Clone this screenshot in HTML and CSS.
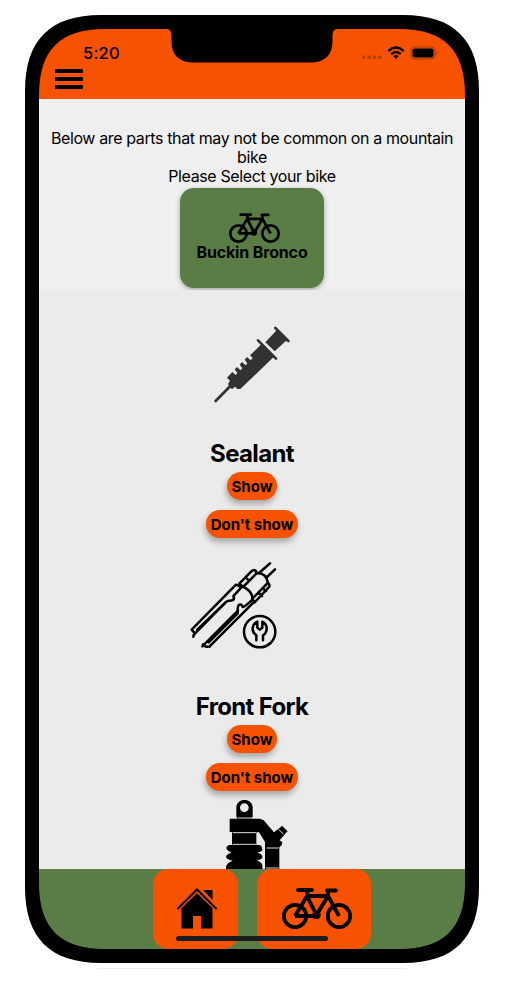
FILE: index.html
```html
<!DOCTYPE html>
<html lang="en">
<head>
<meta charset="utf-8">
<title>Bike parts</title>
<link rel="stylesheet" href="styles.css">
</head>
<body>
<svg class="defs" width="0" height="0" aria-hidden="true">
  <symbol id="bike" viewBox="0 0 70 41">
    <g fill="none" stroke="currentColor" stroke-width="3.800" stroke-linejoin="round">
      <circle cx="13" cy="28" r="11.2"/><circle cx="57" cy="28" r="11.2"/>
      <path d="M13 28 25 8H46L34.500 27M13 28H34.500M25 8 34.500 27M46 8 57 28M24 2 27 9M46 9V2"/>
      <path d="M16 2H30M45 2.500H54" stroke-linecap="round"/>
    </g>
    <circle cx="34.500" cy="27" r="4.200" fill="currentColor"/>
  </symbol>
</svg>
<div class="phone">
  <div class="screen">
    <header class="top">
      <div class="status">
        <span class="time">5:20</span>
        <svg class="indicators" width="78" height="16" viewBox="0 0 78 16">
          <g fill="#b94000"><rect x="1" y="10.500" width="3.500" height="3.500" rx="1"/><rect x="6.300" y="10.500" width="3.500" height="3.500" rx="1"/><rect x="11.600" y="10.500" width="3.500" height="3.500" rx="1"/><rect x="16.900" y="10.500" width="3.500" height="3.500" rx="1"/></g>
          <g fill="none" stroke="#000" stroke-width="2.300"><path d="M27.300 6.200Q35 -1.300 42.700 6.200"/><path d="M30.300 9.200Q35 4.800 39.700 9.200"/></g>
          <path d="M32.400 11.200Q35 9 37.600 11.200L35 14Z"/>
          <rect x="50" y="2" width="24" height="12" rx="3.500" fill="none" stroke="#a83800"/>
          <rect x="51.500" y="3.500" width="21" height="9" rx="2"/>
          <path d="M75.500 6Q77.500 8 75.500 10Z" fill="#a83800"/>
        </svg>
      </div>
      <div class="menu"><i></i><i></i><i></i></div>
      <div class="notch"></div>
    </header>
    <section class="intro">
      <p class="hint">Below are parts that may not be common on a mountain bike</p>
      <p class="select">Please Select your bike</p>
      <div class="bike-card">
        <svg class="card-icon"><use href="#bike"/></svg>
        <span>Buckin Bronco</span>
      </div>
    </section>
    <main class="parts">
      <article class="part sealant">
        <svg class="art" width="105" height="100" viewBox="0 0 315 300">
          <g fill="#323233">
            <path d="M196 82 230 46 260 76 224 109Z"/>
            <path d="M178 83 221 126 121 222H112L105 215 97 222 90 219 84 207 90 197 81 188 97 171 107 180 112 174 104 163 111 156 122 166 127 160 119 149 126 141 137 151 142 145 134 134 141 126 152 136 158 129 150 121 184 88Z"/>
          </g>
          <g stroke="#323233" stroke-width="8" stroke-linecap="round"><path d="M226 39 265 78M174 76 228 131M94 210 47 258"/></g>
        </svg>
        <h2>Sealant</h2>
        <button>Show</button>
        <button>Don't show</button>
      </article>
      <article class="part fork">
        <svg class="art" width="110" height="110" viewBox="0 0 330 330">
          <g fill="none" stroke="#000" stroke-width="7.500" stroke-linecap="round" stroke-linejoin="round">
            <path d="M35 239 168 104 185 111M41 255 133 161M35 239 42 247M41 255 40 260"/>
            <path d="M51 240 133 161Q140 151 150 152Q162 152 162 145Q158 137 165 133L183 113"/>
            <path d="M67 289 174 182M220 158 88 290M69 283 78 290 89 290"/>
            <path d="M86 277 173 190Q172 172 176 165Q184 160 188 171Q195 171 217 149"/>
            <path d="M178 101 214 64Q222 57 229 64V71L189 111M178 101 189 111M197 82 207 92"/>
            <path d="M180 107Q218 119 218 151M229 70Q259 67 264 99M237 69 270 40M258 84 285 58"/>
            <path d="M217 146 262 100Q270 101 268 110L223 158ZM236 128 246 138M248 115 258 123"/>
            <circle cx="239" cy="245" r="47"/>
            <path d="M229 271V256Q217 248 218 234Q220 221 232 215V233L239 239 247 233V215Q260 222 260 235Q260 250 249 256V271"/>
          </g>
        </svg>
        <h2>Front Fork</h2>
        <button>Show</button>
        <button>Don't show</button>
      </article>
      <article class="part shock">
        <svg class="art" width="90" height="85" viewBox="0 0 270 255">
          <path fill-rule="evenodd" d="M79 82V53C79 22 128 22 128 53V82H124V86H150L161 91 192 127 208 114 226 131 209 151 217 157 215 166 208 172V237H165V156L147 127H139V165H150Q158 170 157 179Q156 186 140 187Q156 192 158 201Q157 209 140 210Q158 218 158 230V255H48V230Q51 218 68 212Q49 207 48 200Q51 192 65 187Q49 181 49 173Q50 167 58 165H66V126H59V86H81V82ZM103 40A13 13 0 1 0 103 66A13 13 0 1 0 103 40Z"/>
          <path d="M207 116 216 107 233 124 223 133Z"/>
          <g stroke="#ddd" stroke-width="3"><path d="M83 84H123M68 128H138M68 163H138M169 174H206M168 234H206"/></g>
          <path d="M206 118 221 133" stroke="#ebebeb" stroke-width="3"/>
          <path d="M158 173H165V237H158Z" fill="#ebebeb"/>
        </svg>
      </article>
    </main>
    <nav class="tabs">
      <div class="tab home">
        <svg width="42" height="42" viewBox="0 0 42 42">
          <path d="M21 5 36.500 20V40.500H25V28H17V40.500H5.500V20ZM27 2H36.500V12Z"/>
          <path d="M1.500 21 21 2 40.500 21" fill="none" stroke="#f65200" stroke-width="4"/>
          <path d="M1.500 21 21 1.500 40.500 21" fill="none" stroke="#000" stroke-width="2"/>
        </svg>
      </div>
      <div class="tab bikes"><svg class="tab-icon"><use href="#bike"/></svg></div>
      <div class="indicator"></div>
    </nav>
  </div>
</div>
<div class="edge"></div>
</body>
</html>
```

FILE: styles.css
```css
* { box-sizing: border-box; }
body { margin: 0; background: #fff; color: #000; font-family: Inter, sans-serif; }
.defs { position: absolute; }
.phone {
  width: 454px; height: 948px; margin: 15px 0 0 25px; padding: 14px; background: #000;
  clip-path: path("M76 0H378C429 0 454 25 454 76V872C454 923 429 948 378 948H76C25 948 0 923 0 872V76C0 25 25 0 76 0Z");
}
.edge { width: 310px; height: 1px; margin: 5px 0 0 97px; background: #ededed; }
.screen {
  width: 426px; height: 920px; display: flex; flex-direction: column; overflow: hidden;
  clip-path: path("M66 0H360C405 0 426 21 426 66V854C426 899 405 920 360 920H66C21 920 0 899 0 854V66C0 21 21 0 66 0Z");
}
.top { position: relative; flex: 0 0 69.5px; background: #f65200; }
.status { display: flex; justify-content: space-between; align-items: center; height: 40px; padding: 8px 26px 0 44px; }
.time { font-size: 16.5px; font-weight: 500; line-height: 20px; letter-spacing: .2px; }
.menu { display: grid; gap: 4px; width: 28px; margin-left: 16px; }
.menu i { height: 4px; border-radius: 1px; background: #000; }
.notch { position: absolute; top: 0; left: 128px; width: 170px; height: 34px; background: #000;
  clip-path: path("M0 0H170Q165.500 0 165.500 7V12Q165.500 33.500 143 33.500H27Q4.500 33.500 4.500 12V7Q4.500 0 0 0Z"); }
.intro { flex: 0 0 191.5px; padding-top: 30px; background: #efefef; text-align: center; display: flex; flex-direction: column; align-items: center; overflow: hidden; }
.intro p { margin: 0; font-size: 16px; line-height: 19px; letter-spacing: -.38px; }
.hint { width: 414px; }
.bike-card { width: 144px; height: 99.5px; margin-top: 2.5px; padding-top: 24.5px; border-radius: 14px; background: #5a7d45; box-shadow: 0 2px 5px rgba(0,0,0,.3); display: flex; flex-direction: column; align-items: center; font-size: 16px; font-weight: 700; line-height: 19px; letter-spacing: -.15px; }
.bike-card svg { display: block; width: 51px; height: 30px; margin-left: 5px; }
.parts { flex: 1; min-height: 0; overflow: hidden; background: #ebebeb; }
.part { display: flex; flex-direction: column; align-items: center; }
.part h2 { margin: 0; font-size: 24px; font-weight: 700; line-height: 29px; letter-spacing: -.65px; }
.part button { display: block; border: 0; height: 28px; padding: 1px 5px 0; border-radius: 14px; background: #f65200; color: #000; font: 700 15px/28px Inter, sans-serif; letter-spacing: 0; box-shadow: -1px 4px 6px rgba(0,0,0,.3); }
.part button + button { margin-top: 10px; }
.part h2 + button { margin-top: 4px; }
.sealant .art { margin-top: 25px; }
.sealant h2 { margin-top: 24px; }
.fork .art { margin: 12px 34px 0 0; }
.fork h2 { margin-top: 32px; }
.shock .art { margin: -1px 0 0 6px; }
.tabs { position: relative; flex: 0 0 80px; display: flex; justify-content: center; gap: 19.5px; padding-left: 20px; background: #5a7d45; }
.tab { height: 80px; border-radius: 15px; background: #f65200; display: flex; justify-content: center; padding-top: 19px; }
.tab.home { width: 85px; padding-left: 4px; }
.tab.bikes { width: 114px; padding-left: 5px; }
.tab-icon { width: 70px; height: 41px; }
.indicator { position: absolute; left: 137px; bottom: 8px; width: 152px; height: 5px; border-radius: 3px; background: #1c1c1c; }
```
